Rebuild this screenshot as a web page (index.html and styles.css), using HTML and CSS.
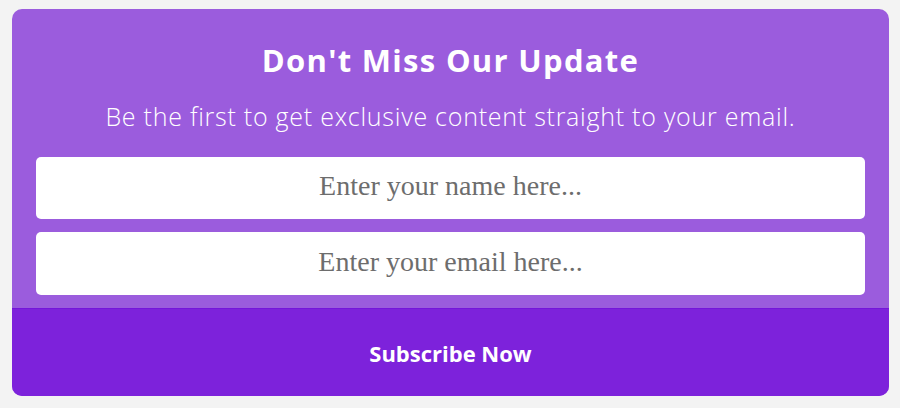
FILE: index.html
```html
<!DOCTYPE html>
<html>
<head>
<meta charset="utf-8">
<link rel="stylesheet" href="styles.css">
</head>
<body>
<div class="page">
  <form class="card">
    <div class="body">
      <h1 class="title">Don't Miss Our Update</h1>
      <p class="subtitle">Be the first to get exclusive content straight to your email.</p>
      <input class="field" type="text" placeholder="Enter your name here...">
      <input class="field" type="email" placeholder="Enter your email here...">
    </div>
    <button class="submit" type="button">Subscribe Now</button>
  </form>
</div>
</body>
</html>
```
FILE: styles.css
```css
html, body {
  margin: 0;
  padding: 0;
  background: #f3f3f3;
}
.page {
  padding: 9px 11px 12px 12px;
}
.card {
  display: flex;
  flex-direction: column;
  background: #9b5cdd;
  border-radius: 10px;
  overflow: hidden;
  height: 387px;
  box-sizing: border-box;
}
.body {
  display: flex;
  flex-direction: column;
  padding: 0 24px 13px 24px;
  flex: 1;
}
.title {
  margin: 30px 0 0 0;
  height: 42px;
  line-height: 42px;
  text-align: center;
  color: #fff;
  font-family: "Open Sans", Lato, sans-serif;
  font-weight: 700;
  font-size: 31px;
  letter-spacing: 1.3px;
}
.subtitle {
  margin: 18px 0 0 0;
  height: 34px;
  line-height: 34px;
  text-align: center;
  color: #fff;
  font-family: "Open Sans", Lato, sans-serif;
  font-weight: 300;
  font-size: 25px;
  letter-spacing: 0.75px;
}
.field {
  display: block;
  box-sizing: border-box;
  margin: 0;
  padding: 0 0 4px 0;
  height: 62px;
  border: none;
  border-radius: 5px;
  background: #fff;
  text-align: center;
  font-family: "Liberation Serif", serif;
  font-size: 28px;
  outline: none;
}
.field + .field {
  margin-top: 13px;
  height: 63px;
}
.subtitle + .field {
  margin-top: 24px;
}
.field::placeholder {
  color: #6d6d6d;
}
.submit {
  flex: none;
  height: 88px;
  border: none;
  border-top: 1px solid #7416d9;
  background: #7d22db;
  color: #fff;
  font-family: "Open Sans", Lato, sans-serif;
  font-weight: 700;
  font-size: 22px;
  margin: 0;
  padding: 0;
}
```
